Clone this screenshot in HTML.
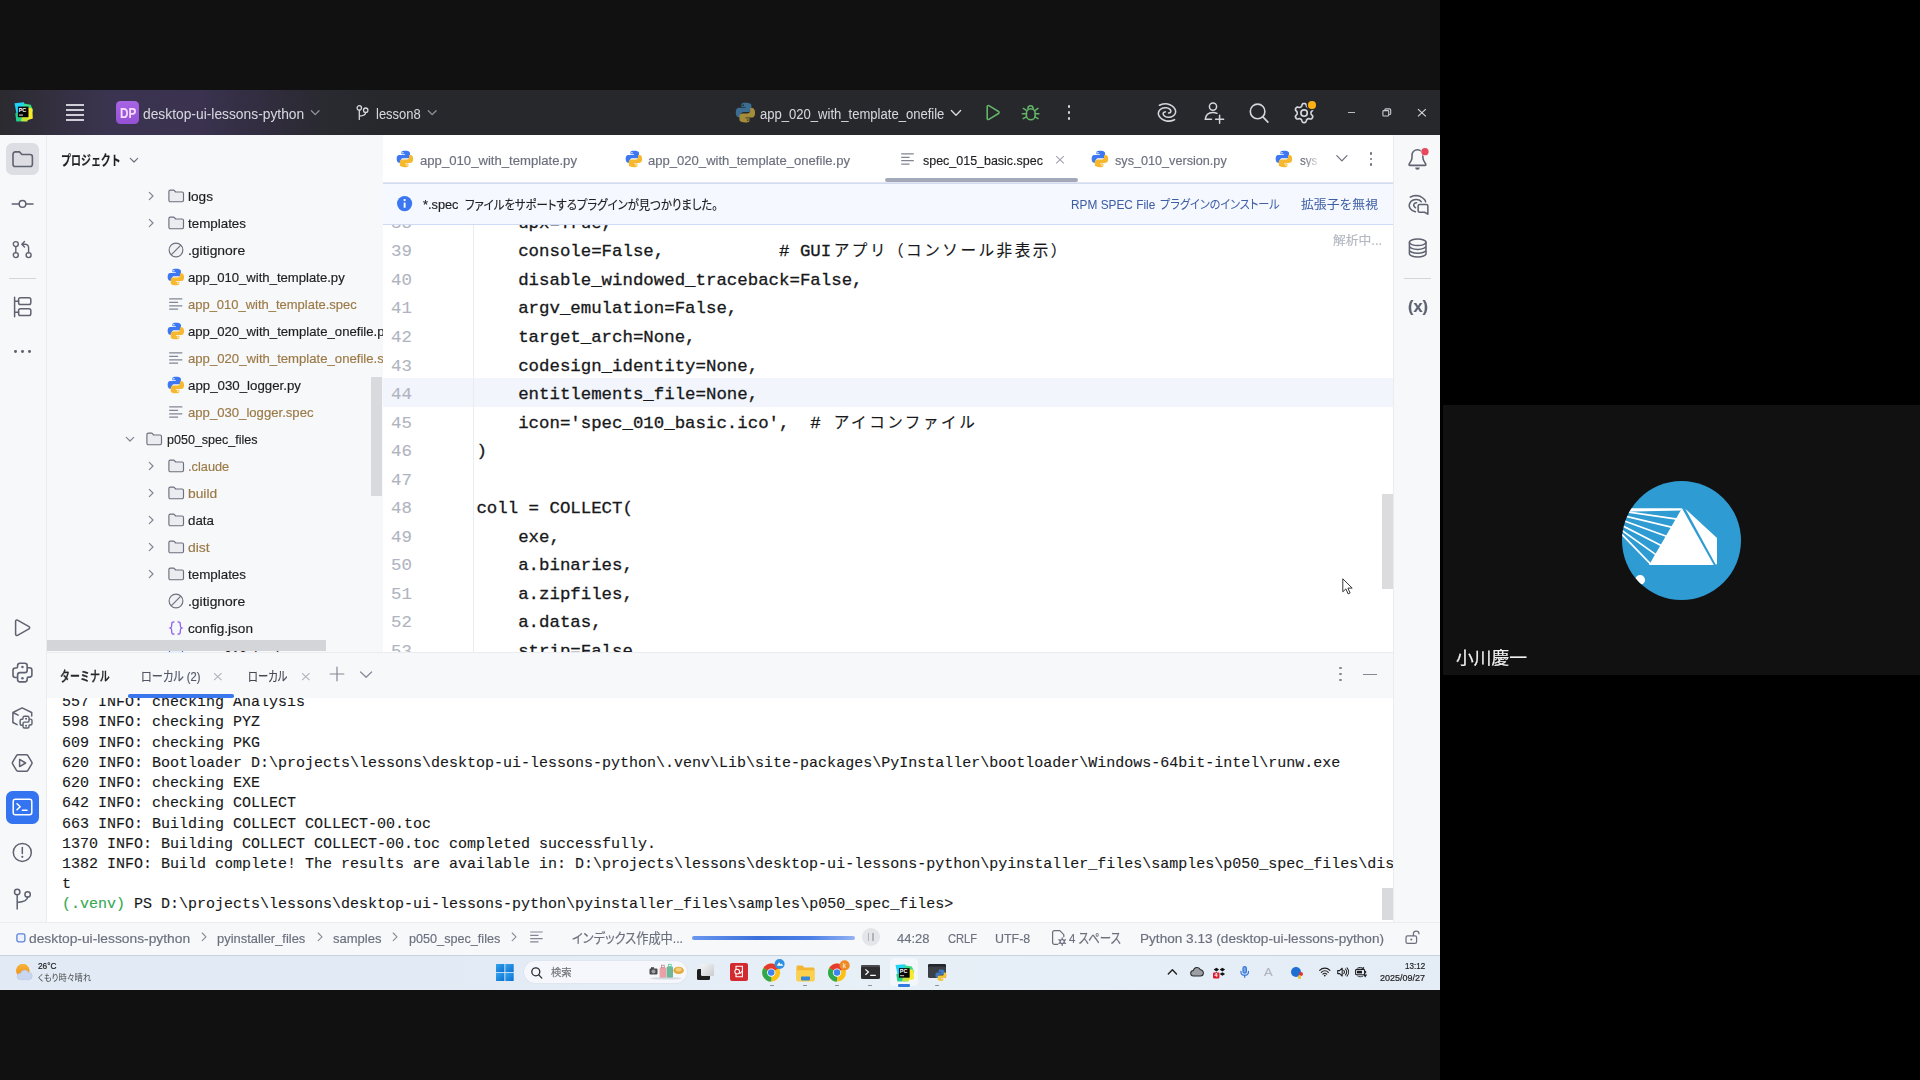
<!DOCTYPE html>
<html lang="ja">
<head>
<meta charset="utf-8">
<title>PyCharm - spec_015_basic.spec</title>
<style>
*{box-sizing:border-box;margin:0;padding:0}
html,body{width:1920px;height:1080px;overflow:hidden;background:#000}
body{position:relative;font-family:"Liberation Sans","Noto Sans CJK JP",sans-serif;font-size:13.5px;color:#1e1f22}
.abs{position:absolute}
.t{position:absolute;white-space:pre;line-height:1;-webkit-text-stroke:0.18px currentColor}
.cj{font-size:15.6px;letter-spacing:2.5px;margin-left:2.5px;-webkit-text-stroke:0.15px currentColor}
.mono{font-family:"Liberation Mono","Noto Sans CJK JP",monospace}
svg{position:absolute;overflow:visible}
#leftbg{left:0;top:0;width:1440px;height:1080px;background:#111111}
#win{left:0;top:90px;width:1440px;height:900px;background:#f7f8fa;overflow:hidden}
/* title bar */
#title{left:0;top:0;width:1440px;height:45px;background:linear-gradient(90deg,#2a2a2f 0px,#332f3e 50px,#3b3450 110px,#3a324f 200px,#322d40 260px,#2a2a31 320px,#27282c 380px,#27282c 1440px)}
#title .t{color:#dfe1e5;font-size:14px;-webkit-text-stroke:0.04px currentColor}
/* strips */
#lstrip{left:0;top:45px;width:47px;height:787px;background:#f7f8fa;box-shadow:inset -1px 0 0 #ebecf0}
#rstrip{left:1393px;top:45px;width:47px;height:787px;background:#f7f8fa;box-shadow:inset 1px 0 0 #ebecf0}
/* project */
#proj{left:47px;top:45px;width:336px;height:517px;background:#f7f8fa;overflow:hidden}
#proj .t{font-size:13.5px;color:#1e1f22}
#proj .t.m{color:#9a7a4a}
/* editor */
#ed{left:383px;top:45px;width:1010px;height:517px;background:#fff;overflow:hidden;box-shadow:inset 1px 0 0 #ebecf0}
#tabs{left:0;top:0;width:1010px;height:48px;background:#fff}
#tabs .t{font-size:13.5px;color:#6c707e}
#banner{left:0;top:48px;width:1010px;height:42px;background:#f5f8fe;box-shadow:inset 0 1px 0 #cfdbf5,inset 0 -1px 0 #cfdbf5}
#banner .t{font-size:13px}
#code{left:0;top:90px;width:1010px;height:427px;background:#fff;overflow:hidden}
.ln{position:absolute;left:0;width:29px;text-align:right;font-family:"Liberation Mono","Noto Sans CJK JP",monospace;font-size:16.4px;color:#a9aebc;line-height:1;white-space:pre}
.cl{position:absolute;left:94px;font-family:"Liberation Mono","Noto Sans CJK JP",monospace;font-size:17.4px;color:#1e1f22;line-height:1;white-space:pre}
/* terminal */
#term{left:47px;top:562px;width:1346px;height:270px;background:#fff;overflow:hidden}
#thead{left:0;top:0;width:1346px;height:46px;background:#f7f8fa;box-shadow:inset 0 1px 0 #ebecf0;z-index:2}
#thead .t{font-size:13px;color:#1e1f22}
.tl{position:absolute;left:15px;font-family:"Liberation Mono","Noto Sans CJK JP",monospace;font-size:15px;color:#1e1f22;line-height:1;white-space:pre}
/* status */
#status{left:0;top:832px;width:1440px;height:33px;background:#f7f8fa;box-shadow:inset 0 1px 0 #ebecf0}
#status .t{font-size:13.5px;color:#6c707e}
/* taskbar */
#task{left:0;top:865px;width:1440px;height:35px;background:linear-gradient(90deg,#e1eaf5 0%,#e2ebf5 30%,#e7eff7 60%,#e4ecf6 100%);box-shadow:inset 0 1px 0 #c9d3df}
#task .t{color:#1e1f22}
/* right */
#rpanel{left:1443px;top:405px;width:477px;height:270px;background:#111111}
</style>
</head>
<body>
<div id="leftbg" class="abs"></div>
<div id="win" class="abs">
  <div id="title" class="abs"><svg style="left:13.50px;top:12.00px;" width="19" height="20" viewBox="0 0 19 20" preserveAspectRatio="none"><path d="M0.5 1.2L10 0.2l1.2 8-8.7 3.2z" fill="#21d3f5"/><path d="M9.5 1.5l7.2 1.2 2.2 5.6-3.2 8.2-6.2.4z" fill="#3ddc84"/><path d="M12.5 5.2l5.8 1.4.5 10-9 2.6-2.5-6z" fill="#f6ea2a"/><path d="M1.3 11.2l9.6-1.5 1.6 9.6-10.2.2z" fill="#23d18b"/><path d="M8 14l6 .2-.5 5.3-6.5-.3z" fill="#c5e236"/><rect x="3.9" y="4.6" width="10.6" height="10.6" fill="#060606"/><text x="4.7" y="10.2" font-family="Liberation Sans,sans-serif" font-size="5.6" font-weight="700" fill="#fff" textLength="7.6" lengthAdjust="spacingAndGlyphs">PC</text><rect x="5" y="12.6" width="4" height="0.9" fill="#fff"/></svg>
<div class="abs" style="left:66.10px;top:14.30px;width:17.80px;height:1.60px;background:#cdced6;"></div>
<div class="abs" style="left:66.10px;top:19.30px;width:17.80px;height:1.60px;background:#cdced6;"></div>
<div class="abs" style="left:66.10px;top:24.30px;width:17.80px;height:1.60px;background:#cdced6;"></div>
<div class="abs" style="left:66.10px;top:29.30px;width:17.80px;height:1.60px;background:#cdced6;"></div>
<div class="abs" style="left:116.10px;top:10.90px;width:22.70px;height:23.00px;background:linear-gradient(180deg,#a765e6,#9451d3);border-radius:4.6px"></div>
<div class="t" style="left:120.20px;top:16.47px;font-size:14.8px;color:#f6dcff;font-weight:700;transform:scaleX(0.7878);transform-origin:0 0;">DP</div>
<div class="t" style="left:143.40px;top:17.25px;font-size:14px;color:#d5d7dd;transform:scaleX(0.9864);transform-origin:0 0;">desktop-ui-lessons-python</div>
<svg style="left:0.00px;top:0.00px;" width="1440" height="45" viewBox="0 0 1440 45" preserveAspectRatio="none"><path d="M311.4 20.799999999999997L315.2 24.599999999999994L319 20.799999999999997" fill="none" stroke="#9093a0" stroke-width="1.3" stroke-linecap="round" stroke-linejoin="round"/><path d="M428.3 20.799999999999997L432.20000000000005 24.599999999999994L436.1 20.799999999999997" fill="none" stroke="#9093a0" stroke-width="1.3" stroke-linecap="round" stroke-linejoin="round"/><path d="M951.4 20.400000000000006L956.0 25.200000000000003L960.6 20.400000000000006" fill="none" stroke="#d5d7dd" stroke-width="1.4" stroke-linecap="round" stroke-linejoin="round"/></svg>
<svg style="left:356.00px;top:15.00px;" width="13" height="15" viewBox="0 0 13 15" preserveAspectRatio="none"><g fill="none" stroke="#d5d7dd" stroke-width="1.3" stroke-linecap="round"><circle cx="3.3" cy="2.9" r="2.2"/><circle cx="9.7" cy="5.2" r="2.2"/><path d="M3.3 5.1v9.3M9.7 7.4c0 2.6-2.2 3.4-6.4 3.6"/></g></svg>
<div class="t" style="left:376.30px;top:17.25px;font-size:14px;color:#d5d7dd;transform:scaleX(0.9261);transform-origin:0 0;">lesson8</div>
<svg style="left:734.62px;top:12.12px;" width="20.864864864864863" height="21.363157894736844" viewBox="0 0 16 16.4" preserveAspectRatio="none"><path d="M7.9.6C4.7.6 4.9 2 4.9 2v1.9H8v.6H3.2S.6 4.2.6 8c0 3.8 2.3 3.7 2.3 3.7h1.4V9.9s-.1-2.3 2.3-2.3h3.8s2.2 0 2.2-2.1V2.7S12.9.6 7.9.6z" fill="#3c6d92"/><circle cx="6.2" cy="2.5" r=".75" fill="#2a3a48"/><g transform="rotate(180 8 8.2)"><path d="M7.9.6C4.7.6 4.9 2 4.9 2v1.9H8v.6H3.2S.6 4.2.6 8c0 3.8 2.3 3.7 2.3 3.7h1.4V9.9s-.1-2.3 2.3-2.3h3.8s2.2 0 2.2-2.1V2.7S12.9.6 7.9.6z" fill="#a38c3a"/><circle cx="6.2" cy="2.5" r=".75" fill="#4a4226"/></g></svg>
<div class="t" style="left:760.40px;top:17.25px;font-size:14px;color:#d5d7dd;transform:scaleX(0.9326);transform-origin:0 0;">app_020_with_template_onefile</div>
<svg style="left:984.00px;top:13.00px;" width="18" height="19" viewBox="0 0 18 19" preserveAspectRatio="none"><path d="M3.2 3.6c0-.9.9-1.4 1.7-1l9.6 5.9c.7.5.7 1.5 0 2l-9.6 5.9c-.8.4-1.7-.1-1.7-1z" fill="none" stroke="#62b568" stroke-width="1.6" stroke-linejoin="round"/></svg>
<svg style="left:1016.00px;top:7.00px;" width="30" height="30" viewBox="0 0 1080 1080" preserveAspectRatio="none"><g fill="none" stroke="#62b568" stroke-width="56" stroke-linecap="round"><path d="M432 415A92 100 0 0 1 616 415"/><rect x="375" y="420" width="315" height="400" rx="157"/><path d="M375 480L262 412M375 600H228M375 715L258 780M690 480L790 412M690 600H825M690 715L792 780"/></g></svg>
<div class="abs" style="left:1067.50px;top:15.40px;width:2.80px;height:2.80px;background:#d5d7dd;border-radius:50%"></div>
<div class="abs" style="left:1067.50px;top:21.20px;width:2.80px;height:2.80px;background:#d5d7dd;border-radius:50%"></div>
<div class="abs" style="left:1067.50px;top:27.00px;width:2.80px;height:2.80px;background:#d5d7dd;border-radius:50%"></div>
<svg style="left:1152.00px;top:8.00px;" width="30" height="30" viewBox="0 0 1080 1080" preserveAspectRatio="none"><path d="M268 262C290 255 351 226 400 218C449 210 507 205 560 215C613 225 675 249 720 280C765 311 806 362 828 400C850 438 855 470 850 505C845 540 828 583 800 612C772 641 725 667 685 680C645 693 599 697 560 692C521 687 478 669 452 650C426 631 407 601 402 580C397 559 406 535 420 522C434 509 474 504 485 500" fill="none" stroke="#d5d7dd" stroke-width="56" stroke-linecap="round"/><g transform="rotate(180 540 521)"><path d="M268 262C290 255 351 226 400 218C449 210 507 205 560 215C613 225 675 249 720 280C765 311 806 362 828 400C850 438 855 470 850 505C845 540 828 583 800 612C772 641 725 667 685 680C645 693 599 697 560 692C521 687 478 669 452 650C426 631 407 601 402 580C397 559 406 535 420 522C434 509 474 504 485 500" fill="none" stroke="#d5d7dd" stroke-width="56" stroke-linecap="round"/></g></svg>
<svg style="left:1204.00px;top:11.90px;" width="21" height="22" viewBox="0 0 21 22" preserveAspectRatio="none"><g fill="none" stroke="#d5d7dd" stroke-width="1.5" stroke-linecap="round"><circle cx="9" cy="4.6" r="3.6"/><path d="M13 11.300c-1.100-.6-2.500-.9-4.100-.9-4.200 0-7.200 2.400-7.600 6.900h6.200"/><path d="M15.6 13.2v8M11.6 17.2h8"/></g></svg>
<svg style="left:1249.00px;top:13.00px;" width="20" height="20" viewBox="0 0 20 20" preserveAspectRatio="none"><g fill="none" stroke="#d5d7dd" stroke-width="1.6" stroke-linecap="round"><circle cx="8.6" cy="8.4" r="7.3"/><path d="M13.9 13.9l5 5.2"/></g></svg>
<svg style="left:1294.00px;top:12.50px;" width="20" height="21" viewBox="0 0 20 21" preserveAspectRatio="none"><path d="M10.10 0.50 L10.52 0.52 L10.93 0.59 L11.33 0.74 L11.69 1.01 L12.00 1.47 L12.23 2.11 L12.40 2.74 L12.59 3.22 L12.80 3.53 L13.04 3.75 L13.29 3.92 L13.55 4.07 L13.81 4.22 L14.09 4.35 L14.40 4.45 L14.77 4.48 L15.28 4.40 L15.92 4.23 L16.58 4.11 L17.13 4.15 L17.55 4.33 L17.88 4.60 L18.14 4.93 L18.37 5.27 L18.56 5.65 L18.70 6.04 L18.78 6.46 L18.73 6.91 L18.48 7.41 L18.04 7.92 L17.58 8.39 L17.26 8.79 L17.10 9.13 L17.03 9.44 L17.01 9.75 L17.00 10.05 L17.01 10.35 L17.03 10.66 L17.10 10.97 L17.26 11.31 L17.58 11.71 L18.04 12.18 L18.48 12.69 L18.73 13.19 L18.78 13.64 L18.70 14.06 L18.56 14.45 L18.37 14.82 L18.14 15.17 L17.88 15.50 L17.55 15.77 L17.13 15.95 L16.58 15.99 L15.92 15.87 L15.28 15.70 L14.77 15.62 L14.40 15.65 L14.09 15.75 L13.81 15.88 L13.55 16.03 L13.29 16.18 L13.04 16.35 L12.80 16.57 L12.59 16.88 L12.40 17.36 L12.23 17.99 L12.00 18.63 L11.69 19.09 L11.33 19.36 L10.93 19.51 L10.52 19.58 L10.10 19.60 L9.68 19.58 L9.27 19.51 L8.87 19.36 L8.51 19.09 L8.20 18.63 L7.97 17.99 L7.80 17.36 L7.61 16.88 L7.40 16.57 L7.16 16.35 L6.91 16.18 L6.65 16.03 L6.39 15.88 L6.11 15.75 L5.80 15.65 L5.43 15.62 L4.92 15.70 L4.28 15.87 L3.62 15.99 L3.07 15.95 L2.65 15.77 L2.32 15.50 L2.06 15.17 L1.83 14.83 L1.64 14.45 L1.50 14.06 L1.42 13.64 L1.47 13.19 L1.72 12.69 L2.16 12.18 L2.62 11.71 L2.94 11.31 L3.10 10.97 L3.17 10.66 L3.19 10.35 L3.20 10.05 L3.19 9.75 L3.17 9.44 L3.10 9.13 L2.94 8.79 L2.62 8.39 L2.16 7.92 L1.72 7.41 L1.47 6.91 L1.42 6.46 L1.50 6.04 L1.64 5.65 L1.83 5.28 L2.06 4.93 L2.32 4.60 L2.65 4.33 L3.07 4.15 L3.62 4.11 L4.28 4.23 L4.92 4.40 L5.43 4.48 L5.80 4.45 L6.11 4.35 L6.39 4.22 L6.65 4.07 L6.91 3.92 L7.16 3.75 L7.40 3.53 L7.61 3.22 L7.80 2.74 L7.97 2.11 L8.20 1.47 L8.51 1.01 L8.87 0.74 L9.27 0.59 L9.68 0.52 L10.10 0.50Z" fill="none" stroke="#d5d7dd" stroke-width="1.65" stroke-linejoin="round"/><circle cx="10.1" cy="10.05" r="3.2" fill="none" stroke="#d5d7dd" stroke-width="1.65"/></svg>
<div class="abs" style="left:1307.95px;top:11.25px;width:7.60px;height:7.60px;background:#ffb011;border-radius:50%;box-shadow:0 0 0 1.3px #27282c"></div>
<div class="abs" style="left:1347.80px;top:22.10px;width:7.60px;height:1.10px;background:#b9bbc2;"></div>
<svg style="left:1382.00px;top:18.00px;" width="10" height="9" viewBox="0 0 10 9" preserveAspectRatio="none"><g fill="none" stroke="#c9cbd1" stroke-width="1.1"><rect x="0.9" y="2.6" width="5.8" height="5.4" rx="0.8"/><path d="M2.8 2.4V1.9c0-.6.4-1 1-1h3.9c.6 0 1 .4 1 1v3.6c0 .6-.4 1-1 1h-.6"/></g></svg>
<svg style="left:1417.00px;top:18.00px;" width="10" height="9" viewBox="0 0 10 9" preserveAspectRatio="none"><path d="M1 1.1l7.8 7.3M8.8 1.1L1 8.4" stroke="#d5d7dd" stroke-width="1.15" fill="none"/></svg></div>
  <div id="lstrip" class="abs"><div class="abs" style="left:6.00px;top:7.80px;width:33.00px;height:32.60px;background:#dcdee3;border-radius:6.5px"></div>
<svg style="left:11.00px;top:14.00px;" width="24" height="20" viewBox="0 0 24 20" preserveAspectRatio="none"><g fill="none" stroke="#5f6270" stroke-width="1.6" stroke-linecap="round" stroke-linejoin="round"><path d="M2 5.2c0-1.3 1-2.3 2.3-2.3h4.2l2.4 2.6h8.2c1.3 0 2.3 1 2.3 2.3v7.4c0 1.3-1 2.3-2.3 2.3H4.3C3 17.5 2 16.500 2 15.200z"/></g></svg>
<svg style="left:10.00px;top:61.00px;" width="26" height="16" viewBox="0 0 26 16" preserveAspectRatio="none"><g fill="none" stroke="#5f6270" stroke-width="1.5" stroke-linecap="round" stroke-linejoin="round"><path d="M2.2 7.9h7M16 7.900h7"/><circle cx="12.5" cy="7.9" r="3.3"/></g></svg>
<svg style="left:12.00px;top:105.00px;" width="22" height="20" viewBox="0 0 22 20" preserveAspectRatio="none"><g fill="none" stroke="#5f6270" stroke-width="1.4" stroke-linecap="round" stroke-linejoin="round"><circle cx="3.8" cy="4.1" r="2.5"/><circle cx="3.8" cy="15.1" r="2.5"/><path d="M3.8 6.400v6.400"/><circle cx="16.6" cy="15.1" r="2.5"/><path d="M16.6 12.800V7.800c0-2.200-1.400-3.600-3.600-3.600h-2.800M12.500 1.500L9.800 4.200l2.700 2.700"/></g></svg>
<div class="abs" style="left:9.30px;top:142.80px;width:26.30px;height:1.10px;background:#d3d5db;"></div>
<svg style="left:13.00px;top:161.00px;" width="20" height="22" viewBox="0 0 20 22" preserveAspectRatio="none"><g fill="none" stroke="#5f6270" stroke-width="1.5" stroke-linecap="round" stroke-linejoin="round"><path d="M1.600 1.300v19.400M1.600 5.200h4M1.600 16.200h4"/><rect x="5.600" y="1.800" width="12.200" height="6.800" rx="1.800"/><rect x="5.600" y="12.800" width="12.200" height="6.800" rx="1.800"/></g></svg>
<div class="abs" style="left:13.80px;top:214.80px;width:2.80px;height:2.80px;background:#5f6270;border-radius:50%"></div>
<div class="abs" style="left:20.90px;top:214.80px;width:2.80px;height:2.80px;background:#5f6270;border-radius:50%"></div>
<div class="abs" style="left:28.00px;top:214.80px;width:2.80px;height:2.80px;background:#5f6270;border-radius:50%"></div>
<svg style="left:13.00px;top:482.00px;" width="20" height="22" viewBox="0 0 20 22" preserveAspectRatio="none"><g fill="none" stroke="#5f6270" stroke-width="1.5" stroke-linecap="round" stroke-linejoin="round"><path d="M2.600 4.200c0-1 1-1.600 1.900-1.100l11.500 6.500c.9.500.9 1.700 0 2.200L4.500 18.300c-.900.500-1.900-.100-1.900-1.100z"/></g></svg>
<svg style="left:8.00px;top:523.00px;" width="30" height="30" viewBox="0 0 1080 1080" preserveAspectRatio="none"><path d="M340 700H265A85 85 0 0 1 180 615V445A85 85 0 0 1 265 360H300A45 45 0 0 0 345 315V275A85 85 0 0 1 430 190H605A85 85 0 0 1 690 275V440A85 85 0 0 1 605 525H430A85 85 0 0 0 345 610V775A85 85 0 0 0 430 860H605A85 85 0 0 0 690 775V735A45 45 0 0 1 735 690H775A85 85 0 0 0 860 605V435A85 85 0 0 0 775 350H700" fill="none" stroke="#5f6270" stroke-width="58" stroke-linecap="round" stroke-linejoin="round"/><circle cx="520" cy="325" r="46" fill="#5f6270"/><circle cx="520" cy="730" r="46" fill="#5f6270"/></svg>
<svg style="left:11.00px;top:571.00px;" width="23" height="24" viewBox="0 0 23 24" preserveAspectRatio="none"><g fill="none" stroke="#5f6270" stroke-width="1.5" stroke-linecap="round" stroke-linejoin="round"><path d="M6.100 18.600L1.900 16.500V6.500L11.100 1.900l9.600 4.600v3.600M1.900 6.500l5.200 2.600"/></g></svg>
<svg style="left:16.99px;top:578.11px;" width="18.827027027027025" height="18.827027027027025" viewBox="0 0 1080 1080" preserveAspectRatio="none"><path d="M340 700H265A85 85 0 0 1 180 615V445A85 85 0 0 1 265 360H300A45 45 0 0 0 345 315V275A85 85 0 0 1 430 190H605A85 85 0 0 1 690 275V440A85 85 0 0 1 605 525H430A85 85 0 0 0 345 610V775A85 85 0 0 0 430 860H605A85 85 0 0 0 690 775V735A45 45 0 0 1 735 690H775A85 85 0 0 0 860 605V435A85 85 0 0 0 775 350H700" fill="none" stroke="#5f6270" stroke-width="82" stroke-linecap="round" stroke-linejoin="round"/><circle cx="520" cy="325" r="58" fill="#5f6270"/><circle cx="520" cy="730" r="58" fill="#5f6270"/></svg>
<svg style="left:11.00px;top:617.70px;" width="23" height="20" viewBox="0 0 23 20" preserveAspectRatio="none"><g fill="none" stroke="#5f6270" stroke-width="1.5" stroke-linecap="round" stroke-linejoin="round"><path d="M6.900 1.800h8.600c.6 0 1.100.3 1.400.8l3.900 6.600c.3.500.3 1.100 0 1.600l-3.900 6.600c-.3.500-.8.800-1.400.8H6.900c-.6 0-1.100-.3-1.400-.8L1.600 10.800c-.3-.5-.3-1.100 0-1.600l3.900-6.600c.3-.5.800-.8 1.400-.8z"/><path d="M8.600 6.400v7.200l6-3.600z"/></g></svg>
<div class="abs" style="left:5.90px;top:656.00px;width:32.70px;height:32.70px;background:#3574f0;border-radius:6.5px"></div>
<svg style="left:12.00px;top:663.40px;" width="21" height="18" viewBox="0 0 21 18" preserveAspectRatio="none"><g fill="none" stroke="#ffffff" stroke-width="1.5" stroke-linecap="round" stroke-linejoin="round"><rect x="1.200" y="1.200" width="18.600" height="15.600" rx="2.200"/><path d="M5 5.800l3.200 3-3.200 3M10.400 12.200h4.600"/></g></svg>
<svg style="left:11.00px;top:706.00px;" width="23" height="23" viewBox="0 0 23 23" preserveAspectRatio="none"><g fill="none" stroke="#5f6270" stroke-width="1.5" stroke-linecap="round" stroke-linejoin="round"><circle cx="11.300" cy="11.400" r="9"/><path d="M11.300 6.400v6.200"/></g><circle cx="11.300" cy="15.800" r="1.100" fill="#5f6270"/></svg>
<svg style="left:12.50px;top:753.00px;" width="20" height="23" viewBox="0 0 20 23" preserveAspectRatio="none"><g fill="none" stroke="#5f6270" stroke-width="1.5" stroke-linecap="round" stroke-linejoin="round"><circle cx="4.200" cy="4" r="2.700"/><circle cx="14.600" cy="6.400" r="2.700"/><path d="M4.200 6.700v14.300M14.600 9.100c0 3.800-3.600 5-10.400 5.300"/></g></svg></div>
  <div id="proj" class="abs"><div class="t" style="left:13.50px;top:18.87px;font-size:13.5px;color:#1e1f22;font-weight:700;transform:scaleX(0.7383);transform-origin:0 0;">プロジェクト</div>
<svg style="left:78.50px;top:16.50px;" width="16" height="16" viewBox="0 0 16 16" preserveAspectRatio="none"><path d="M4.3 6.3l3.7 3.7 3.7-3.7" fill="none" stroke="#6c707e" stroke-width="1.2" stroke-linecap="round" stroke-linejoin="round"/></svg>
<div class="t" style="left:141.30px;top:55.47px;font-size:13.5px;color:#1e1f22;transform:scaleX(1.0095);transform-origin:0 0;">logs</div>
<svg style="left:120.70px;top:52.90px;" width="16" height="16" viewBox="0 0 16 16" preserveAspectRatio="none"><path d="M.9 3.5c0-.8.6-1.4 1.4-1.4h3.6l1.8 1.9h6.4c.8 0 1.4.6 1.4 1.4v6.9c0 .8-.6 1.4-1.4 1.4H2.3c-.8 0-1.4-.6-1.4-1.4z" fill="#ebecf0" stroke="#6c707e" stroke-width="1.15" stroke-linejoin="round"/></svg>
<svg style="left:96.20px;top:52.90px;" width="16" height="16" viewBox="0 0 16 16" preserveAspectRatio="none"><path d="M6.3 4.3l3.7 3.7-3.7 3.7" fill="none" stroke="#818594" stroke-width="1.2" stroke-linecap="round" stroke-linejoin="round"/></svg>
<div class="t" style="left:141.30px;top:82.47px;font-size:13.5px;color:#1e1f22;transform:scaleX(0.9909);transform-origin:0 0;">templates</div>
<svg style="left:120.70px;top:79.90px;" width="16" height="16" viewBox="0 0 16 16" preserveAspectRatio="none"><path d="M.9 3.5c0-.8.6-1.4 1.4-1.4h3.6l1.8 1.9h6.4c.8 0 1.4.6 1.4 1.4v6.9c0 .8-.6 1.4-1.4 1.4H2.3c-.8 0-1.4-.6-1.4-1.4z" fill="#ebecf0" stroke="#6c707e" stroke-width="1.15" stroke-linejoin="round"/></svg>
<svg style="left:96.20px;top:79.90px;" width="16" height="16" viewBox="0 0 16 16" preserveAspectRatio="none"><path d="M6.3 4.3l3.7 3.7-3.7 3.7" fill="none" stroke="#818594" stroke-width="1.2" stroke-linecap="round" stroke-linejoin="round"/></svg>
<div class="t" style="left:141.30px;top:109.47px;font-size:13.5px;color:#1e1f22;transform:scaleX(1.0298);transform-origin:0 0;">.gitignore</div>
<svg style="left:120.70px;top:106.90px;" width="16" height="16" viewBox="0 0 16 16" preserveAspectRatio="none"><circle cx="8" cy="8" r="6.9" fill="#f0f1f3" stroke="#6c707e" stroke-width="1.15"/><path d="M3.2 12.8l9.6-9.6" stroke="#6c707e" stroke-width="1.15"/></svg>
<div class="t" style="left:141.30px;top:136.47px;font-size:13.5px;color:#1e1f22;transform:scaleX(0.9710);transform-origin:0 0;">app_010_with_template.py</div>
<svg style="left:119.84px;top:132.75px;" width="17.73" height="17.9" viewBox="0 0 16 16.4" preserveAspectRatio="none"><path d="M7.9.6C4.7.6 4.9 2 4.9 2v1.9H8v.6H3.2S.6 4.2.6 8c0 3.8 2.3 3.7 2.3 3.7h1.4V9.9s-.1-2.3 2.3-2.3h3.8s2.2 0 2.2-2.1V2.7S12.9.6 7.9.6z" fill="#3d78f2"/><circle cx="6.2" cy="2.5" r=".75" fill="#dfe9ff"/><g transform="rotate(180 8 8.2)"><path d="M7.9.6C4.7.6 4.9 2 4.9 2v1.9H8v.6H3.2S.6 4.2.6 8c0 3.8 2.3 3.7 2.3 3.7h1.4V9.9s-.1-2.3 2.3-2.3h3.8s2.2 0 2.2-2.1V2.7S12.9.6 7.9.6z" fill="#f5b82e"/><circle cx="6.2" cy="2.5" r=".75" fill="#fff3d0"/></g></svg>
<div class="t" style="left:141.30px;top:163.47px;font-size:13.5px;color:#9b7a48;transform:scaleX(0.9605);transform-origin:0 0;">app_010_with_template.spec</div>
<svg style="left:120.70px;top:160.60px;" width="16" height="16" viewBox="0 0 16 16" preserveAspectRatio="none"><path d="M1.2 2.9h13.1M1.2 6.3h8.9M1.2 9.75h13.1M1.2 13.2h8.9" stroke="#818594" stroke-width="1.25" fill="none"/></svg>
<div class="t" style="left:141.30px;top:190.47px;font-size:13.5px;color:#1e1f22;transform:scaleX(0.9735);transform-origin:0 0;">app_020_with_template_onefile.py</div>
<svg style="left:119.84px;top:186.75px;" width="17.73" height="17.9" viewBox="0 0 16 16.4" preserveAspectRatio="none"><path d="M7.9.6C4.7.6 4.9 2 4.9 2v1.9H8v.6H3.2S.6 4.2.6 8c0 3.8 2.3 3.7 2.3 3.7h1.4V9.9s-.1-2.3 2.3-2.3h3.8s2.2 0 2.2-2.1V2.7S12.9.6 7.9.6z" fill="#3d78f2"/><circle cx="6.2" cy="2.5" r=".75" fill="#dfe9ff"/><g transform="rotate(180 8 8.2)"><path d="M7.9.6C4.7.6 4.9 2 4.9 2v1.9H8v.6H3.2S.6 4.2.6 8c0 3.8 2.3 3.7 2.3 3.7h1.4V9.9s-.1-2.3 2.3-2.3h3.8s2.2 0 2.2-2.1V2.7S12.9.6 7.9.6z" fill="#f5b82e"/><circle cx="6.2" cy="2.5" r=".75" fill="#fff3d0"/></g></svg>
<div class="t" style="left:141.30px;top:217.47px;font-size:13.5px;color:#9b7a48;transform:scaleX(0.9735);transform-origin:0 0;">app_020_with_template_onefile.spec</div>
<svg style="left:120.70px;top:214.60px;" width="16" height="16" viewBox="0 0 16 16" preserveAspectRatio="none"><path d="M1.2 2.9h13.1M1.2 6.3h8.9M1.2 9.75h13.1M1.2 13.2h8.9" stroke="#818594" stroke-width="1.25" fill="none"/></svg>
<div class="t" style="left:141.30px;top:244.47px;font-size:13.5px;color:#1e1f22;transform:scaleX(0.9838);transform-origin:0 0;">app_030_logger.py</div>
<svg style="left:119.84px;top:240.75px;" width="17.73" height="17.9" viewBox="0 0 16 16.4" preserveAspectRatio="none"><path d="M7.9.6C4.7.6 4.9 2 4.9 2v1.9H8v.6H3.2S.6 4.2.6 8c0 3.8 2.3 3.7 2.3 3.7h1.4V9.9s-.1-2.3 2.3-2.3h3.8s2.2 0 2.2-2.1V2.7S12.9.6 7.9.6z" fill="#3d78f2"/><circle cx="6.2" cy="2.5" r=".75" fill="#dfe9ff"/><g transform="rotate(180 8 8.2)"><path d="M7.9.6C4.7.6 4.9 2 4.9 2v1.9H8v.6H3.2S.6 4.2.6 8c0 3.8 2.3 3.7 2.3 3.7h1.4V9.9s-.1-2.3 2.3-2.3h3.8s2.2 0 2.2-2.1V2.7S12.9.6 7.9.6z" fill="#f5b82e"/><circle cx="6.2" cy="2.5" r=".75" fill="#fff3d0"/></g></svg>
<div class="t" style="left:141.30px;top:271.47px;font-size:13.5px;color:#9b7a48;transform:scaleX(0.9719);transform-origin:0 0;">app_030_logger.spec</div>
<svg style="left:120.70px;top:268.60px;" width="16" height="16" viewBox="0 0 16 16" preserveAspectRatio="none"><path d="M1.2 2.9h13.1M1.2 6.3h8.9M1.2 9.75h13.1M1.2 13.2h8.9" stroke="#818594" stroke-width="1.25" fill="none"/></svg>
<div class="t" style="left:119.90px;top:298.47px;font-size:13.5px;color:#1e1f22;transform:scaleX(0.9285);transform-origin:0 0;">p050_spec_files</div>
<svg style="left:99.30px;top:295.90px;" width="16" height="16" viewBox="0 0 16 16" preserveAspectRatio="none"><path d="M.9 3.5c0-.8.6-1.4 1.4-1.4h3.6l1.8 1.9h6.4c.8 0 1.4.6 1.4 1.4v6.9c0 .8-.6 1.4-1.4 1.4H2.3c-.8 0-1.4-.6-1.4-1.4z" fill="#ebecf0" stroke="#6c707e" stroke-width="1.15" stroke-linejoin="round"/></svg>
<svg style="left:74.80px;top:295.90px;" width="16" height="16" viewBox="0 0 16 16" preserveAspectRatio="none"><path d="M4.3 6.3l3.7 3.7 3.7-3.7" fill="none" stroke="#818594" stroke-width="1.2" stroke-linecap="round" stroke-linejoin="round"/></svg>
<div class="t" style="left:141.30px;top:325.47px;font-size:13.5px;color:#9b7a48;transform:scaleX(0.9461);transform-origin:0 0;">.claude</div>
<svg style="left:120.70px;top:322.90px;" width="16" height="16" viewBox="0 0 16 16" preserveAspectRatio="none"><path d="M.9 3.5c0-.8.6-1.4 1.4-1.4h3.6l1.8 1.9h6.4c.8 0 1.4.6 1.4 1.4v6.9c0 .8-.6 1.4-1.4 1.4H2.3c-.8 0-1.4-.6-1.4-1.4z" fill="#ebecf0" stroke="#6c707e" stroke-width="1.15" stroke-linejoin="round"/></svg>
<svg style="left:96.20px;top:322.90px;" width="16" height="16" viewBox="0 0 16 16" preserveAspectRatio="none"><path d="M6.3 4.3l3.7 3.7-3.7 3.7" fill="none" stroke="#818594" stroke-width="1.2" stroke-linecap="round" stroke-linejoin="round"/></svg>
<div class="t" style="left:141.30px;top:352.47px;font-size:13.5px;color:#9b7a48;transform:scaleX(1.0234);transform-origin:0 0;">build</div>
<svg style="left:120.70px;top:349.90px;" width="16" height="16" viewBox="0 0 16 16" preserveAspectRatio="none"><path d="M.9 3.5c0-.8.6-1.4 1.4-1.4h3.6l1.8 1.9h6.4c.8 0 1.4.6 1.4 1.4v6.9c0 .8-.6 1.4-1.4 1.4H2.3c-.8 0-1.4-.6-1.4-1.4z" fill="#ebecf0" stroke="#6c707e" stroke-width="1.15" stroke-linejoin="round"/></svg>
<svg style="left:96.20px;top:349.90px;" width="16" height="16" viewBox="0 0 16 16" preserveAspectRatio="none"><path d="M6.3 4.3l3.7 3.7-3.7 3.7" fill="none" stroke="#818594" stroke-width="1.2" stroke-linecap="round" stroke-linejoin="round"/></svg>
<div class="t" style="left:141.30px;top:379.47px;font-size:13.5px;color:#1e1f22;transform:scaleX(0.9893);transform-origin:0 0;">data</div>
<svg style="left:120.70px;top:376.90px;" width="16" height="16" viewBox="0 0 16 16" preserveAspectRatio="none"><path d="M.9 3.5c0-.8.6-1.4 1.4-1.4h3.6l1.8 1.9h6.4c.8 0 1.4.6 1.4 1.4v6.9c0 .8-.6 1.4-1.4 1.4H2.3c-.8 0-1.4-.6-1.4-1.4z" fill="#ebecf0" stroke="#6c707e" stroke-width="1.15" stroke-linejoin="round"/></svg>
<svg style="left:96.20px;top:376.90px;" width="16" height="16" viewBox="0 0 16 16" preserveAspectRatio="none"><path d="M6.3 4.3l3.7 3.7-3.7 3.7" fill="none" stroke="#818594" stroke-width="1.2" stroke-linecap="round" stroke-linejoin="round"/></svg>
<div class="t" style="left:141.30px;top:406.47px;font-size:13.5px;color:#9b7a48;transform:scaleX(1.0326);transform-origin:0 0;">dist</div>
<svg style="left:120.70px;top:403.90px;" width="16" height="16" viewBox="0 0 16 16" preserveAspectRatio="none"><path d="M.9 3.5c0-.8.6-1.4 1.4-1.4h3.6l1.8 1.9h6.4c.8 0 1.4.6 1.4 1.4v6.9c0 .8-.6 1.4-1.4 1.4H2.3c-.8 0-1.4-.6-1.4-1.4z" fill="#ebecf0" stroke="#6c707e" stroke-width="1.15" stroke-linejoin="round"/></svg>
<svg style="left:96.20px;top:403.90px;" width="16" height="16" viewBox="0 0 16 16" preserveAspectRatio="none"><path d="M6.3 4.3l3.7 3.7-3.7 3.7" fill="none" stroke="#818594" stroke-width="1.2" stroke-linecap="round" stroke-linejoin="round"/></svg>
<div class="t" style="left:141.30px;top:433.47px;font-size:13.5px;color:#1e1f22;transform:scaleX(0.9909);transform-origin:0 0;">templates</div>
<svg style="left:120.70px;top:430.90px;" width="16" height="16" viewBox="0 0 16 16" preserveAspectRatio="none"><path d="M.9 3.5c0-.8.6-1.4 1.4-1.4h3.6l1.8 1.9h6.4c.8 0 1.4.6 1.4 1.4v6.9c0 .8-.6 1.4-1.4 1.4H2.3c-.8 0-1.4-.6-1.4-1.4z" fill="#ebecf0" stroke="#6c707e" stroke-width="1.15" stroke-linejoin="round"/></svg>
<svg style="left:96.20px;top:430.90px;" width="16" height="16" viewBox="0 0 16 16" preserveAspectRatio="none"><path d="M6.3 4.3l3.7 3.7-3.7 3.7" fill="none" stroke="#818594" stroke-width="1.2" stroke-linecap="round" stroke-linejoin="round"/></svg>
<div class="t" style="left:141.30px;top:460.47px;font-size:13.5px;color:#1e1f22;transform:scaleX(1.0298);transform-origin:0 0;">.gitignore</div>
<svg style="left:120.70px;top:457.90px;" width="16" height="16" viewBox="0 0 16 16" preserveAspectRatio="none"><circle cx="8" cy="8" r="6.9" fill="#f0f1f3" stroke="#6c707e" stroke-width="1.15"/><path d="M3.2 12.8l9.6-9.6" stroke="#6c707e" stroke-width="1.15"/></svg>
<div class="t" style="left:141.30px;top:487.47px;font-size:13.5px;color:#1e1f22;transform:scaleX(1.0070);transform-origin:0 0;">config.json</div>
<svg style="left:120.70px;top:484.90px;" width="16" height="16" viewBox="0 0 16 16" preserveAspectRatio="none"><path d="M6 1.8c-1.8 0-2.3.8-2.3 2.2v1.7c0 1.1-.5 1.9-1.6 2.3 1.1.4 1.6 1.2 1.6 2.3V12c0 1.4.5 2.2 2.3 2.2" fill="none" stroke="#8a5cf5" stroke-width="1.25" stroke-linecap="round"/><path d="M10 1.8c1.8 0 2.3.8 2.3 2.2v1.7c0 1.1.5 1.9 1.6 2.3-1.1.4-1.6 1.2-1.6 2.3V12c0 1.4-.5 2.2-2.3 2.2" fill="none" stroke="#8a5cf5" stroke-width="1.25" stroke-linecap="round"/></svg>
<svg style="left:120.70px;top:511.90px;" width="16" height="16" viewBox="0 0 16 16" preserveAspectRatio="none"><rect x="1.5" y="1.5" width="13" height="13" rx="2" fill="#e7efff" stroke="#3574f0" stroke-width="1.2"/></svg>
<div class="t" style="left:141.30px;top:514.47px;font-size:13.5px;color:#1e1f22;">spec_010_basic.py</div>
<div class="abs" style="left:0.00px;top:505.30px;width:278.50px;height:10.70px;background:#d4d5d8;"></div>
<div class="abs" style="left:323.70px;top:241.50px;width:11.00px;height:119.00px;background:#d9dadd;"></div></div>
  <div id="ed" class="abs">
    <div id="tabs" class="abs"><div class="abs" style="left:0.00px;top:47.00px;width:1010.00px;height:1.00px;background:#e4e6ec;"></div>
<svg style="left:12.83px;top:15.45px;" width="17.83783783783784" height="17.802631578947366" viewBox="0 0 16 16.4" preserveAspectRatio="none"><path d="M7.9.6C4.7.6 4.9 2 4.9 2v1.9H8v.6H3.2S.6 4.2.6 8c0 3.8 2.3 3.7 2.3 3.7h1.4V9.9s-.1-2.3 2.3-2.3h3.8s2.2 0 2.2-2.1V2.7S12.9.6 7.9.6z" fill="#3d78f2"/><circle cx="6.2" cy="2.5" r=".75" fill="#dfe9ff"/><g transform="rotate(180 8 8.2)"><path d="M7.9.6C4.7.6 4.9 2 4.9 2v1.9H8v.6H3.2S.6 4.2.6 8c0 3.8 2.3 3.7 2.3 3.7h1.4V9.9s-.1-2.3 2.3-2.3h3.8s2.2 0 2.2-2.1V2.7S12.9.6 7.9.6z" fill="#f5b82e"/><circle cx="6.2" cy="2.5" r=".75" fill="#fff3d0"/></g></svg>
<div class="t" style="left:37.00px;top:18.67px;font-size:13.5px;color:#6c707e;transform:scaleX(0.9729);transform-origin:0 0;">app_010_with_template.py</div>
<svg style="left:242.03px;top:15.45px;" width="17.83783783783784" height="17.802631578947366" viewBox="0 0 16 16.4" preserveAspectRatio="none"><path d="M7.9.6C4.7.6 4.9 2 4.9 2v1.9H8v.6H3.2S.6 4.2.6 8c0 3.8 2.3 3.7 2.3 3.7h1.4V9.9s-.1-2.3 2.3-2.3h3.8s2.2 0 2.2-2.1V2.7S12.9.6 7.9.6z" fill="#3d78f2"/><circle cx="6.2" cy="2.5" r=".75" fill="#dfe9ff"/><g transform="rotate(180 8 8.2)"><path d="M7.9.6C4.7.6 4.9 2 4.9 2v1.9H8v.6H3.2S.6 4.2.6 8c0 3.8 2.3 3.7 2.3 3.7h1.4V9.9s-.1-2.3 2.3-2.3h3.8s2.2 0 2.2-2.1V2.7S12.9.6 7.9.6z" fill="#f5b82e"/><circle cx="6.2" cy="2.5" r=".75" fill="#fff3d0"/></g></svg>
<div class="t" style="left:265.40px;top:18.67px;font-size:13.5px;color:#6c707e;transform:scaleX(0.9680);transform-origin:0 0;">app_020_with_template_onefile.py</div>
<svg style="left:517.00px;top:16.00px;" width="16" height="16" viewBox="0 0 16 16" preserveAspectRatio="none"><path d="M1.2 2.9h12.6M1.2 6.3h8.4M1.2 9.7h12.6M1.2 13.1h8.4" stroke="#818594" stroke-width="1.2" fill="none"/></svg>
<div class="t" style="left:539.60px;top:18.57px;font-size:13.5px;color:#1e1f22;transform:scaleX(0.9234);transform-origin:0 0;">spec_015_basic.spec</div>
<svg style="left:672.00px;top:20.00px;" width="10" height="10" viewBox="0 0 10 10" preserveAspectRatio="none"><path d="M1.2 1.2l7.6 7.2M8.8 1.2L1.2 8.4" stroke="#a0a3ad" stroke-width="1.1" fill="none"/></svg>
<div class="abs" style="left:501.90px;top:42.60px;width:192.80px;height:4.20px;background:#a4a9b9;border-radius:2.1px"></div>
<svg style="left:707.63px;top:15.45px;" width="17.83783783783784" height="17.802631578947366" viewBox="0 0 16 16.4" preserveAspectRatio="none"><path d="M7.9.6C4.7.6 4.9 2 4.9 2v1.9H8v.6H3.2S.6 4.2.6 8c0 3.8 2.3 3.7 2.3 3.7h1.4V9.9s-.1-2.3 2.3-2.3h3.8s2.2 0 2.2-2.1V2.7S12.9.6 7.9.6z" fill="#3d78f2"/><circle cx="6.2" cy="2.5" r=".75" fill="#dfe9ff"/><g transform="rotate(180 8 8.2)"><path d="M7.9.6C4.7.6 4.9 2 4.9 2v1.9H8v.6H3.2S.6 4.2.6 8c0 3.8 2.3 3.7 2.3 3.7h1.4V9.9s-.1-2.3 2.3-2.3h3.8s2.2 0 2.2-2.1V2.7S12.9.6 7.9.6z" fill="#f5b82e"/><circle cx="6.2" cy="2.5" r=".75" fill="#fff3d0"/></g></svg>
<div class="t" style="left:732.00px;top:18.67px;font-size:13.5px;color:#6c707e;transform:scaleX(0.9361);transform-origin:0 0;">sys_010_version.py</div>
<svg style="left:892.33px;top:15.45px;" width="17.83783783783784" height="17.802631578947366" viewBox="0 0 16 16.4" preserveAspectRatio="none"><path d="M7.9.6C4.7.6 4.9 2 4.9 2v1.9H8v.6H3.2S.6 4.2.6 8c0 3.8 2.3 3.7 2.3 3.7h1.4V9.9s-.1-2.3 2.3-2.3h3.8s2.2 0 2.2-2.1V2.7S12.9.6 7.9.6z" fill="#3d78f2"/><circle cx="6.2" cy="2.5" r=".75" fill="#dfe9ff"/><g transform="rotate(180 8 8.2)"><path d="M7.9.6C4.7.6 4.9 2 4.9 2v1.9H8v.6H3.2S.6 4.2.6 8c0 3.8 2.3 3.7 2.3 3.7h1.4V9.9s-.1-2.3 2.3-2.3h3.8s2.2 0 2.2-2.1V2.7S12.9.6 7.9.6z" fill="#f5b82e"/><circle cx="6.2" cy="2.5" r=".75" fill="#fff3d0"/></g></svg>
<div class="t" style="left:916.60px;top:18.67px;font-size:13.5px;color:#6c707e;transform:scaleX(0.8593);transform-origin:0 0;-webkit-mask-image:linear-gradient(90deg,#000 20%,rgba(0,0,0,.25) 100%);">sys</div>
<svg style="left:951.00px;top:15.00px;" width="16" height="16" viewBox="0 0 16 16" preserveAspectRatio="none"><path d="M2.8 5.6l5.1 5.3 5.1-5.3" fill="none" stroke="#6c707e" stroke-width="1.25" stroke-linecap="round" stroke-linejoin="round"/></svg>
<div class="abs" style="left:986.50px;top:17.20px;width:2.60px;height:2.60px;background:#6c707e;border-radius:50%"></div>
<div class="abs" style="left:986.50px;top:22.80px;width:2.60px;height:2.60px;background:#6c707e;border-radius:50%"></div>
<div class="abs" style="left:986.50px;top:28.40px;width:2.60px;height:2.60px;background:#6c707e;border-radius:50%"></div></div>
    <div id="banner" class="abs"><svg style="left:14.30px;top:13.20px;" width="15.2" height="15.2" viewBox="0 0 15.2 15.2" preserveAspectRatio="none"><circle cx="7.6" cy="7.6" r="7.6" fill="#3b77f0"/><rect x="6.7" y="6.4" width="1.9" height="5.4" rx=".5" fill="#fff"/><circle cx="7.65" cy="4.1" r="1.15" fill="#fff"/></svg>
<div class="t" style="left:40.30px;top:15.43px;font-size:13.2px;color:#1e1f22;transform:scaleX(0.9685);transform-origin:0 0;">*.spec</div>
<div class="t" style="left:81.60px;top:15.73px;font-size:12.6px;color:#1e1f22;font-feature-settings:'palt';transform:scaleX(0.9027);transform-origin:0 0;">ファイルをサポートするプラグインが見つかりました。</div>
<div class="t" style="left:688.10px;top:15.33px;font-size:13.2px;color:#3f5fa5;transform:scaleX(0.8988);transform-origin:0 0;-webkit-text-stroke:0.05px currentColor;">RPM SPEC File</div>
<div class="t" style="left:776.50px;top:15.80px;font-size:12.4px;color:#3f5fa5;font-feature-settings:'palt';transform:scaleX(0.8983);transform-origin:0 0;-webkit-text-stroke:0.05px currentColor;">プラグインのインストール</div>
<div class="t" style="left:918.00px;top:15.97px;font-size:12.2px;color:#3f5fa5;transform:scaleX(1.0530);transform-origin:0 0;-webkit-text-stroke:0.05px currentColor;">拡張子を無視</div></div>
    <div id="code" class="abs"><div class="abs" style="left:0.00px;top:153.40px;width:1010.00px;height:28.54px;background:#f2f5fc;"></div>
<div class="abs" style="left:90.20px;top:0.00px;width:1.00px;height:427.00px;background:#ebecf0;"></div>
<div class="t mono" style="left:8.00px;top:-10.18px;font-size:17.4px;color:#b0b4c0;-webkit-text-stroke:0.1px currentColor;">38</div>
<div class="t mono" style="left:93.40px;top:-10.18px;font-size:17.4px;color:#17181a;-webkit-text-stroke:0.3px currentColor;">    upx=True,</div>
<div class="t mono" style="left:8.00px;top:18.36px;font-size:17.4px;color:#b0b4c0;-webkit-text-stroke:0.1px currentColor;">39</div>
<div class="t mono" style="left:93.40px;top:18.36px;font-size:17.4px;color:#17181a;-webkit-text-stroke:0.3px currentColor;">    console=False,           # GUI<span class="cj">アプリ（コンソール非表示）</span></div>
<div class="t mono" style="left:8.00px;top:46.90px;font-size:17.4px;color:#b0b4c0;-webkit-text-stroke:0.1px currentColor;">40</div>
<div class="t mono" style="left:93.40px;top:46.90px;font-size:17.4px;color:#17181a;-webkit-text-stroke:0.3px currentColor;">    disable_windowed_traceback=False,</div>
<div class="t mono" style="left:8.00px;top:75.44px;font-size:17.4px;color:#b0b4c0;-webkit-text-stroke:0.1px currentColor;">41</div>
<div class="t mono" style="left:93.40px;top:75.44px;font-size:17.4px;color:#17181a;-webkit-text-stroke:0.3px currentColor;">    argv_emulation=False,</div>
<div class="t mono" style="left:8.00px;top:103.98px;font-size:17.4px;color:#b0b4c0;-webkit-text-stroke:0.1px currentColor;">42</div>
<div class="t mono" style="left:93.40px;top:103.98px;font-size:17.4px;color:#17181a;-webkit-text-stroke:0.3px currentColor;">    target_arch=None,</div>
<div class="t mono" style="left:8.00px;top:132.52px;font-size:17.4px;color:#b0b4c0;-webkit-text-stroke:0.1px currentColor;">43</div>
<div class="t mono" style="left:93.40px;top:132.52px;font-size:17.4px;color:#17181a;-webkit-text-stroke:0.3px currentColor;">    codesign_identity=None,</div>
<div class="t mono" style="left:8.00px;top:161.06px;font-size:17.4px;color:#b0b4c0;-webkit-text-stroke:0.1px currentColor;">44</div>
<div class="t mono" style="left:93.40px;top:161.06px;font-size:17.4px;color:#17181a;-webkit-text-stroke:0.3px currentColor;">    entitlements_file=None,</div>
<div class="t mono" style="left:8.00px;top:189.60px;font-size:17.4px;color:#b0b4c0;-webkit-text-stroke:0.1px currentColor;">45</div>
<div class="t mono" style="left:93.40px;top:189.60px;font-size:17.4px;color:#17181a;-webkit-text-stroke:0.3px currentColor;">    icon='spec_010_basic.ico',  # <span class="cj">アイコンファイル</span></div>
<div class="t mono" style="left:8.00px;top:218.14px;font-size:17.4px;color:#b0b4c0;-webkit-text-stroke:0.1px currentColor;">46</div>
<div class="t mono" style="left:93.40px;top:218.14px;font-size:17.4px;color:#17181a;-webkit-text-stroke:0.3px currentColor;">)</div>
<div class="t mono" style="left:8.00px;top:246.68px;font-size:17.4px;color:#b0b4c0;-webkit-text-stroke:0.1px currentColor;">47</div>
<div class="t mono" style="left:8.00px;top:275.22px;font-size:17.4px;color:#b0b4c0;-webkit-text-stroke:0.1px currentColor;">48</div>
<div class="t mono" style="left:93.40px;top:275.22px;font-size:17.4px;color:#17181a;-webkit-text-stroke:0.3px currentColor;">coll = COLLECT(</div>
<div class="t mono" style="left:8.00px;top:303.76px;font-size:17.4px;color:#b0b4c0;-webkit-text-stroke:0.1px currentColor;">49</div>
<div class="t mono" style="left:93.40px;top:303.76px;font-size:17.4px;color:#17181a;-webkit-text-stroke:0.3px currentColor;">    exe,</div>
<div class="t mono" style="left:8.00px;top:332.30px;font-size:17.4px;color:#b0b4c0;-webkit-text-stroke:0.1px currentColor;">50</div>
<div class="t mono" style="left:93.40px;top:332.30px;font-size:17.4px;color:#17181a;-webkit-text-stroke:0.3px currentColor;">    a.binaries,</div>
<div class="t mono" style="left:8.00px;top:360.84px;font-size:17.4px;color:#b0b4c0;-webkit-text-stroke:0.1px currentColor;">51</div>
<div class="t mono" style="left:93.40px;top:360.84px;font-size:17.4px;color:#17181a;-webkit-text-stroke:0.3px currentColor;">    a.zipfiles,</div>
<div class="t mono" style="left:8.00px;top:389.38px;font-size:17.4px;color:#b0b4c0;-webkit-text-stroke:0.1px currentColor;">52</div>
<div class="t mono" style="left:93.40px;top:389.38px;font-size:17.4px;color:#17181a;-webkit-text-stroke:0.3px currentColor;">    a.datas,</div>
<div class="t mono" style="left:8.00px;top:417.92px;font-size:17.4px;color:#b0b4c0;-webkit-text-stroke:0.1px currentColor;">53</div>
<div class="t mono" style="left:93.40px;top:417.92px;font-size:17.4px;color:#17181a;-webkit-text-stroke:0.3px currentColor;">    strip=False,</div>
<div class="abs" style="left:999.20px;top:269.20px;width:11.30px;height:95.00px;background:#dcdcdf;"></div>
<svg style="left:959.20px;top:352.60px;" width="12" height="18" viewBox="0 0 12 18" preserveAspectRatio="none"><path d="M.8 .8v13l3.100-2.900 2.200 5 2-.9-2.200-4.900h4.300z" fill="#fff" stroke="#2a2a2e" stroke-width=".95" stroke-linejoin="round"/></svg>
<div class="t" style="left:950.00px;top:9.62px;font-size:12.5px;color:#b4b8c2;transform:scaleX(1.0225);transform-origin:0 0;">解析中...</div></div>
  </div>
  <div id="rstrip" class="abs"><svg style="left:10.00px;top:9.00px;" width="30" height="30" viewBox="0 0 1080 1080" preserveAspectRatio="none"><path d="M250 770Q200 762 225 712L298 590Q325 540 325 470V400A195 195 0 0 1 715 400V470Q715 540 742 590L815 712Q840 762 790 770Z" fill="none" stroke="#5f6270" stroke-width="56" stroke-linejoin="round"/><path d="M438 845H602A82 82 0 0 1 438 845Z" fill="#5f6270"/><circle cx="790" cy="275" r="158" fill="#f7f8fa"/><circle cx="790" cy="275" r="132" fill="#e5495b"/></svg>
<svg style="left:10.00px;top:55.00px;" width="30" height="30" viewBox="0 0 1080 1080" preserveAspectRatio="none"><path d="M265 250C288 243 354 214 400 207C446 200 493 200 540 210C587 220 640 242 680 265C720 288 758 323 780 350C802 377 809 412 815 425M655 420C642 410 611 373 580 360C549 347 508 338 470 340C432 342 385 352 350 370C315 388 281 420 260 450C239 480 227 517 225 550C223 583 232 620 250 650C268 680 298 708 330 730C362 752 426 772 445 780M490 460C478 463 438 467 420 480C402 493 387 520 385 540C383 560 399 583 410 600C421 617 443 633 450 640M600 525H840A55 55 0 0 1 895 580V870L775 800H600A55 55 0 0 1 545 745V580A55 55 0 0 1 600 525Z" fill="none" stroke="#5f6270" stroke-width="56" stroke-linecap="round" stroke-linejoin="round"/></svg>
<svg style="left:14.80px;top:103.10px;" width="20" height="21" viewBox="0 0 20 21" preserveAspectRatio="none"><g fill="none" stroke="#5f6270" stroke-width="1.5" stroke-linecap="round" stroke-linejoin="round"><ellipse cx="9.700" cy="4.300" rx="8.300" ry="3.300"/><path d="M1.400 4.300v11.400c0 1.800 3.700 3.300 8.300 3.300s8.300-1.500 8.300-3.300V4.300M1.400 8.100c0 1.800 3.700 3.300 8.300 3.300S18 9.900 18 8.100M1.400 11.900c0 1.800 3.700 3.300 8.300 3.300s8.300-1.500 8.300-3.300"/></g></svg>
<div class="abs" style="left:11.00px;top:142.70px;width:26.70px;height:1.10px;background:#d3d5db;"></div>
<div class="t" style="left:14.60px;top:163.43px;font-size:16.5px;color:#5f6270;font-weight:700;transform:scaleX(0.9915);transform-origin:0 0;">(x)</div></div>
  <div id="term" class="abs">
    <div id="thead" class="abs"><div class="t" style="left:12.80px;top:18.13px;font-size:13.2px;color:#26282c;font-weight:500;transform:scaleX(0.7553);transform-origin:0 0;-webkit-text-stroke:0.35px currentColor;">ターミナル</div>
<div class="t" style="left:93.50px;top:18.13px;font-size:13.2px;color:#525766;font-feature-settings:'palt';transform:scaleX(0.8477);transform-origin:0 0;">ローカル (2)</div>
<svg style="left:166.00px;top:19.70px;" width="10" height="10" viewBox="0 0 10 10" preserveAspectRatio="none"><path d="M1.100 1.100l7.400 7M8.500 1.100L1.100 8.100" stroke="#b0b3bc" stroke-width="1.100" fill="none"/></svg>
<div class="abs" style="left:81.20px;top:42.10px;width:106.20px;height:3.60px;background:#3a76ee;border-radius:1.8px"></div>
<div class="t" style="left:201.40px;top:18.13px;font-size:13.2px;color:#43464f;font-feature-settings:'palt';transform:scaleX(0.7797);transform-origin:0 0;">ローカル</div>
<svg style="left:254.30px;top:19.70px;" width="10" height="10" viewBox="0 0 10 10" preserveAspectRatio="none"><path d="M1.100 1.100l7.400 7M8.500 1.100L1.100 8.100" stroke="#b0b3bc" stroke-width="1.100" fill="none"/></svg>
<svg style="left:282.00px;top:14.00px;" width="16" height="16" viewBox="0 0 16 16" preserveAspectRatio="none"><path d="M8 1.200v13.600M1.200 8h13.600" stroke="#858895" stroke-width="1.200" fill="none" stroke-linecap="round"/></svg>
<svg style="left:311.40px;top:15.00px;" width="16" height="16" viewBox="0 0 16 16" preserveAspectRatio="none"><path d="M2.600 5l5.500 5.300L13.600 5" fill="none" stroke="#858895" stroke-width="1.200" stroke-linecap="round" stroke-linejoin="round"/></svg>
<div class="abs" style="left:1292.40px;top:15.10px;width:2.20px;height:2.20px;background:#858893;border-radius:50%"></div>
<div class="abs" style="left:1292.40px;top:21.10px;width:2.20px;height:2.20px;background:#858893;border-radius:50%"></div>
<div class="abs" style="left:1292.40px;top:27.10px;width:2.20px;height:2.20px;background:#858893;border-radius:50%"></div>
<div class="abs" style="left:1315.50px;top:21.50px;width:14.40px;height:1.20px;background:#858893;"></div></div>
    <div class="t mono" style="left:15.00px;top:43.18px;font-size:15px;color:#17181a;-webkit-text-stroke:0.12px currentColor;">557 INFO: checking Analysis</div>
<div class="t mono" style="left:15.00px;top:63.40px;font-size:15px;color:#17181a;-webkit-text-stroke:0.12px currentColor;">598 INFO: checking PYZ</div>
<div class="t mono" style="left:15.00px;top:83.62px;font-size:15px;color:#17181a;-webkit-text-stroke:0.12px currentColor;">609 INFO: checking PKG</div>
<div class="t mono" style="left:15.00px;top:103.84px;font-size:15px;color:#17181a;-webkit-text-stroke:0.12px currentColor;">620 INFO: Bootloader D:\projects\lessons\desktop-ui-lessons-python\.venv\Lib\site-packages\PyInstaller\bootloader\Windows-64bit-intel\runw.exe</div>
<div class="t mono" style="left:15.00px;top:124.06px;font-size:15px;color:#17181a;-webkit-text-stroke:0.12px currentColor;">620 INFO: checking EXE</div>
<div class="t mono" style="left:15.00px;top:144.28px;font-size:15px;color:#17181a;-webkit-text-stroke:0.12px currentColor;">642 INFO: checking COLLECT</div>
<div class="t mono" style="left:15.00px;top:164.50px;font-size:15px;color:#17181a;-webkit-text-stroke:0.12px currentColor;">663 INFO: Building COLLECT COLLECT-00.toc</div>
<div class="t mono" style="left:15.00px;top:184.72px;font-size:15px;color:#17181a;-webkit-text-stroke:0.12px currentColor;">1370 INFO: Building COLLECT COLLECT-00.toc completed successfully.</div>
<div class="t mono" style="left:15.00px;top:204.94px;font-size:15px;color:#17181a;-webkit-text-stroke:0.12px currentColor;">1382 INFO: Build complete! The results are available in: D:\projects\lessons\desktop-ui-lessons-python\pyinstaller_files\samples\p050_spec_files\dis</div>
<div class="t mono" style="left:15.00px;top:225.16px;font-size:15px;color:#17181a;-webkit-text-stroke:0.12px currentColor;">t</div>
<div class="t mono" style="left:15.00px;top:245.38px;font-size:15px;color:#17181a;-webkit-text-stroke:0.12px currentColor;"><span style="color:#35a852">(.venv)</span> PS D:\projects\lessons\desktop-ui-lessons-python\pyinstaller_files\samples\p050_spec_files&gt;</div>
<div class="abs" style="left:1335.00px;top:236.00px;width:11.00px;height:32.00px;background:#d9dadd;"></div>
  </div>
  <div id="status" class="abs"><svg style="left:15.60px;top:11.20px;" width="10" height="10" viewBox="0 0 10 10" preserveAspectRatio="none"><rect x=".9" y=".9" width="8" height="8" rx="1.800" fill="#edf2fd" stroke="#5a82dc" stroke-width="1.300"/></svg>
<div class="t" style="left:29.40px;top:9.57px;font-size:13.5px;color:#6c707e;transform:scaleX(1.0222);transform-origin:0 0;">desktop-ui-lessons-python</div>
<svg style="left:201.20px;top:10.40px;" width="7" height="10" viewBox="0 0 7 10" preserveAspectRatio="none"><path d="M1.200 1l3.800 3.800L1.200 8.600" fill="none" stroke="#8a8d99" stroke-width="1.150" stroke-linecap="round" stroke-linejoin="round"/></svg>
<div class="t" style="left:217.30px;top:9.57px;font-size:13.5px;color:#6c707e;transform:scaleX(0.9567);transform-origin:0 0;">pyinstaller_files</div>
<svg style="left:316.60px;top:10.40px;" width="7" height="10" viewBox="0 0 7 10" preserveAspectRatio="none"><path d="M1.200 1l3.800 3.800L1.200 8.600" fill="none" stroke="#8a8d99" stroke-width="1.150" stroke-linecap="round" stroke-linejoin="round"/></svg>
<div class="t" style="left:332.80px;top:9.57px;font-size:13.5px;color:#6c707e;transform:scaleX(0.9646);transform-origin:0 0;">samples</div>
<svg style="left:391.80px;top:10.40px;" width="7" height="10" viewBox="0 0 7 10" preserveAspectRatio="none"><path d="M1.200 1l3.800 3.800L1.200 8.600" fill="none" stroke="#8a8d99" stroke-width="1.150" stroke-linecap="round" stroke-linejoin="round"/></svg>
<div class="t" style="left:408.50px;top:9.57px;font-size:13.5px;color:#6c707e;transform:scaleX(0.9357);transform-origin:0 0;">p050_spec_files</div>
<svg style="left:510.60px;top:10.40px;" width="7" height="10" viewBox="0 0 7 10" preserveAspectRatio="none"><path d="M1.200 1l3.800 3.800L1.200 8.600" fill="none" stroke="#8a8d99" stroke-width="1.150" stroke-linecap="round" stroke-linejoin="round"/></svg>
<svg style="left:529.30px;top:7.80px;" width="16" height="14" viewBox="0 0 16 14" preserveAspectRatio="none"><path d="M1.200 2h12.400M1.200 5.300h8.300M1.200 8.600h12.400M1.200 11.900h8.300" stroke="#818594" stroke-width="1.150" fill="none"/></svg>
<div class="t" style="left:571.60px;top:9.83px;font-size:13.2px;color:#6c707e;font-feature-settings:'palt';transform:scaleX(0.9257);transform-origin:0 0;">インデックス作成中...</div>
<div class="abs" style="left:691.80px;top:13.60px;width:163.20px;height:4.40px;background:linear-gradient(90deg,#6a97ef 0%,#3b70dc 40%,#4a7fe6 72%,#93b3f3 100%);border-radius:2.2px"></div>
<div class="abs" style="left:861.70px;top:6.30px;width:18.00px;height:18.00px;background:#e4e5e9;border-radius:50%"></div>
<div class="abs" style="left:867.70px;top:11.20px;width:1.70px;height:8.20px;background:#b0b3bc;"></div>
<div class="abs" style="left:872.00px;top:11.20px;width:1.70px;height:8.20px;background:#b0b3bc;"></div>
<div class="t" style="left:896.80px;top:9.57px;font-size:13.5px;color:#6c707e;transform:scaleX(0.9616);transform-origin:0 0;">44:28</div>
<div class="t" style="left:947.80px;top:9.57px;font-size:13.5px;color:#6c707e;transform:scaleX(0.8252);transform-origin:0 0;">CRLF</div>
<div class="t" style="left:995.40px;top:9.57px;font-size:13.5px;color:#6c707e;transform:scaleX(0.9203);transform-origin:0 0;">UTF-8</div>
<svg style="left:1051.40px;top:6.60px;" width="16" height="18" viewBox="0 0 16 18" preserveAspectRatio="none"><g fill="none" stroke="#6c707e" stroke-width="1.250" stroke-linejoin="round" stroke-linecap="round"><path d="M6.600 15.400H3.400c-1 0-1.800-.8-1.800-1.800V3.400c0-1 .8-1.800 1.800-1.800h5.400l4 4v2.200"/><circle cx="11.200" cy="12.600" r="2.100"/><path d="M11.200 8.800v1.300M11.200 15.100v1.300M7.900 10.700l1.100.65M13.400 13.850l1.100.65M7.900 14.500l1.100-.65M13.400 11.350l1.100-.65"/></g></svg>
<div class="t" style="left:1069.40px;top:9.83px;font-size:13.2px;color:#6c707e;font-feature-settings:'palt';transform:scaleX(0.8716);transform-origin:0 0;">4 スペース</div>
<div class="t" style="left:1139.80px;top:9.57px;font-size:13.5px;color:#6c707e;transform:scaleX(1.0066);transform-origin:0 0;">Python 3.13 (desktop-ui-lessons-python)</div>
<svg style="left:1405.20px;top:8.40px;" width="16" height="15" viewBox="0 0 16 15" preserveAspectRatio="none"><g fill="none" stroke="#6c707e" stroke-width="1.250" stroke-linecap="round"><rect x="1" y="5.800" width="10.600" height="7.600" rx="1.600"/><path d="M8.400 5.600V3.800c0-1.600 1.200-2.800 2.800-2.800s2.800 1.200 2.800 2.800"/></g><circle cx="6.300" cy="9.600" r="1" fill="#6c707e"/></svg></div>
  <div id="task" class="abs"><svg style="left:15.40px;top:8.20px;" width="18" height="18" viewBox="0 0 18 18" preserveAspectRatio="none"><defs><linearGradient id="sung" x1="0" y1="0" x2="0" y2="1"><stop offset="0" stop-color="#f8b53a"/><stop offset="1" stop-color="#ef8a15"/></linearGradient></defs><circle cx="7.800" cy="7.600" r="6.600" fill="#f5a21f"/><circle cx="7.800" cy="7.600" r="6.600" fill="url(#sung)"/><path d="M5.200 16.600a3.200 3.200 0 0 1 .300-6.400 4.300 4.300 0 0 1 8-.800 3.600 3.600 0 0 1 .300 7.200z" fill="#c9d6ef" stroke="#aebfe0" stroke-width=".5"/></svg>
<div class="t" style="left:37.70px;top:6.98px;font-size:9px;color:#1c1c1c;transform:scaleX(0.9200);transform-origin:0 0;-webkit-text-stroke:0.2px currentColor;">26°C</div>
<div class="t" style="left:37.60px;top:19.15px;font-size:8.8px;color:#4a4a4a;font-feature-settings:'palt';transform:scaleX(0.9416);transform-origin:0 0;-webkit-text-stroke:0;">くもり時々晴れ</div>
<svg style="left:495.50px;top:8.70px;" width="17.7" height="17" viewBox="0 0 17.7 17" preserveAspectRatio="none"><defs><linearGradient id="wg" x1="0" y1="0" x2="1" y2="1"><stop offset="0" stop-color="#35a5ee"/><stop offset="1" stop-color="#0b6fd2"/></linearGradient></defs><g fill="url(#wg)"><rect x="0" y="0" width="8.400" height="8.100"/><rect x="9.300" y="0" width="8.400" height="8.100"/><rect x="0" y="8.900" width="8.400" height="8.100"/><rect x="9.300" y="8.900" width="8.400" height="8.100"/></g></svg>
<div class="abs" style="left:523.70px;top:6.20px;width:163.30px;height:21.80px;background:#f5f7fc;border-radius:11px;box-shadow:0 0 0 .6px #d9dfea"></div>
<svg style="left:530.00px;top:11.00px;" width="14" height="14" viewBox="0 0 14 14" preserveAspectRatio="none"><g fill="none" stroke="#2a2a2a" stroke-width="1.300" stroke-linecap="round"><circle cx="5.800" cy="5.800" r="4"/><path d="M8.800 8.900l3 3.200"/></g></svg>
<div class="t" style="left:550.60px;top:13.27px;font-size:10.2px;color:#707378;transform:scaleX(1.0160);transform-origin:0 0;">検索</div>
<svg style="left:649.30px;top:9.20px;" width="35" height="16" viewBox="0 0 35 16" preserveAspectRatio="none"><rect x="0.500" y="4.500" width="8" height="6" rx="1" fill="#4a4a4a"/><circle cx="4.500" cy="7.500" r="2" fill="#9aa0a8"/><rect x="2" y="3.300" width="3" height="1.500" fill="#333"/><rect x="10.600" y="3.600" width="6.600" height="10.400" rx="1.200" fill="#eaa1a6"/><rect x="12.600" y="1.200" width="2.600" height="2.600" fill="none" stroke="#b77" stroke-width=".7"/><rect x="17.600" y="2.400" width="6.400" height="11.600" rx="1.200" fill="#6fb79a"/><rect x="19.400" y="0.300" width="2.800" height="2.300" fill="none" stroke="#4c8" stroke-width=".7"/><ellipse cx="29.600" cy="6.400" rx="5.200" ry="3.600" fill="#e3a93c"/><ellipse cx="29.600" cy="5.600" rx="3" ry="2" fill="#f3cf7a"/><ellipse cx="17" cy="14.300" rx="16" ry="1.300" fill="#c9ccd3" opacity=".7"/></svg>
<div class="abs" style="left:697.00px;top:13.80px;width:13.00px;height:11.20px;background:#1e1e1e;border-radius:1.5px"></div>
<div class="abs" style="left:701.20px;top:9.00px;width:13.20px;height:12.00px;background:linear-gradient(135deg,#f4f5f6,#c9ccd0);border-radius:1.2px"></div>
<div class="abs" style="left:730.00px;top:8.00px;width:18.00px;height:17.70px;background:#d22a2e;border-radius:2px"></div>
<svg style="left:732.50px;top:10.40px;" width="13" height="13" viewBox="0 0 13 13" preserveAspectRatio="none"><g fill="none" stroke="#fff" stroke-width="1.100"><path d="M3 1.200h6.400v10.600H3z"/><circle cx="4.200" cy="6.600" r="2.400" fill="#d22a2e"/><path d="M6.600 8.800l3.200-3.200"/></g></svg>
<svg style="left:760.00px;top:3.00px;" width="30" height="30" viewBox="0 0 30 30" preserveAspectRatio="none"><circle cx="11.2" cy="14.6" r="9" fill="#fbc116"/><path d="M11.2 14.6L3.41 10.10A9 9 0 0 1 18.99 10.10z" fill="#e33b2e"/><path d="M11.2 14.6L3.41 10.10A9 9 0 0 0 11.20 23.60z" fill="#2da94f"/><circle cx="11.2" cy="14.6" r="4.14" fill="#fff"/><circle cx="11.2" cy="14.6" r="3.24" fill="#3f83f0"/><circle cx="19.600" cy="6" r="5" fill="#2f8fe0"/><path d="M16.800 7.800l2.300-3.600 1.600 2.400 1-1.200 1.400 2.400z" fill="#fff"/></svg>
<svg style="left:795.50px;top:8.60px;" width="19" height="18" viewBox="0 0 19 18" preserveAspectRatio="none"><path d="M.5 3c0-.8.600-1.400 1.400-1.400h4.600l1.800 1.800h8.800c.8 0 1.400.6 1.400 1.400v10.400c0 .8-.6 1.400-1.400 1.400H1.900c-.8 0-1.400-.6-1.400-1.400z" fill="#f2b632"/><path d="M.5 6.200h18v9.800c0 .8-.6 1.400-1.400 1.400H1.900c-.8 0-1.400-.6-1.400-1.400z" fill="#fbd04e"/><rect x="5" y="12.400" width="9" height="4" rx=".8" fill="#2f86dd"/></svg>
<svg style="left:826.00px;top:3.00px;" width="30" height="30" viewBox="0 0 30 30" preserveAspectRatio="none"><circle cx="11" cy="14.6" r="9" fill="#fbc116"/><path d="M11 14.6L3.21 10.10A9 9 0 0 1 18.79 10.10z" fill="#e33b2e"/><path d="M11 14.6L3.21 10.10A9 9 0 0 0 11.00 23.60z" fill="#2da94f"/><circle cx="11" cy="14.6" r="4.14" fill="#fff"/><circle cx="11" cy="14.6" r="3.24" fill="#3f83f0"/><circle cx="18.600" cy="7.400" r="5.100" fill="#f08a24"/><text x="16.700" y="9.700" font-family="Liberation Sans,sans-serif" font-size="6.500" fill="#fff">k</text></svg>
<div class="abs" style="left:861.20px;top:10.40px;width:18.80px;height:13.40px;background:#2d2d2f;border-radius:1.5px;box-shadow:inset 0 2px 0 #4b4b4f"></div>
<svg style="left:863.50px;top:13.40px;" width="14" height="9" viewBox="0 0 14 9" preserveAspectRatio="none"><path d="M1.400 1.400l3 2.700-3 2.700M6.200 7.400h5.600" fill="none" stroke="#fff" stroke-width="1.250"/></svg>
<div class="abs" style="left:890.00px;top:3.00px;width:27.50px;height:27.50px;background:rgba(255,255,255,.5);border-radius:4px"></div>
<svg style="left:894.50px;top:8.50px;" width="19.2" height="18" viewBox="0 0 19 20" preserveAspectRatio="none"><path d="M0.500 1.200L10 0.200l1.200 8-8.700 3.200z" fill="#21d3f5"/><path d="M9.500 1.500l7.200 1.200 2.200 5.600-3.200 8.200-6.200.4z" fill="#3ddc84"/><path d="M12.500 5.200l5.800 1.400.5 10-9 2.600-2.500-6z" fill="#f6ea2a"/><path d="M1.300 11.200l9.600-1.500 1.600 9.600-10.200.2z" fill="#23d18b"/><path d="M8 14l6 .2-.5 5.300-6.500-.3z" fill="#c5e236"/><rect x="3.900" y="4.600" width="10.600" height="10.600" fill="#060606"/><text x="4.700" y="10.200" font-family="Liberation Sans,sans-serif" font-size="5.600" font-weight="700" fill="#fff" textLength="7.600" lengthAdjust="spacingAndGlyphs">PC</text><rect x="5" y="12.600" width="4" height=".9" fill="#fff"/></svg>
<div class="abs" style="left:898.00px;top:29.20px;width:11.50px;height:2.40px;background:#2f7de1;border-radius:1.2px"></div>
<div class="abs" style="left:927.50px;top:9.00px;width:18.00px;height:14.00px;background:#3b4046;border-radius:1.5px;box-shadow:inset 0 2.500px 0 #23262a"></div>
<svg style="left:934.50px;top:13.50px;" width="12" height="12" viewBox="0 0 12 12" preserveAspectRatio="none"><path d="M5.900.4C3.500.4 3.700 1.500 3.700 1.500v1.400H6v.5H2.400S.4 3.100.4 6c0 2.900 1.700 2.800 1.700 2.800h1.100V7.400s0-1.700 1.700-1.700h2.900s1.600 0 1.600-1.600V2S9.700.4 5.900.4z" fill="#3d78c2"/><g transform="rotate(180 6 6.150)"><path d="M5.900.4C3.500.4 3.700 1.500 3.700 1.500v1.400H6v.5H2.400S.4 3.100.4 6c0 2.900 1.700 2.800 1.700 2.800h1.100V7.400s0-1.700 1.700-1.700h2.900s1.600 0 1.600-1.600V2S9.700.4 5.900.4z" fill="#f2c43a"/></g></svg>
<div class="abs" style="left:769.50px;top:29.60px;width:4.00px;height:1.70px;background:#8a8f98;border-radius:.8px"></div>
<div class="abs" style="left:802.80px;top:29.60px;width:4.00px;height:1.70px;background:#8a8f98;border-radius:.8px"></div>
<div class="abs" style="left:835.30px;top:29.60px;width:4.00px;height:1.70px;background:#8a8f98;border-radius:.8px"></div>
<div class="abs" style="left:868.40px;top:29.60px;width:4.00px;height:1.70px;background:#8a8f98;border-radius:.8px"></div>
<div class="abs" style="left:934.60px;top:29.60px;width:4.00px;height:1.70px;background:#8a8f98;border-radius:.8px"></div>
<svg style="left:1167.00px;top:13.00px;" width="11" height="8" viewBox="0 0 11 8" preserveAspectRatio="none"><path d="M1.300 6.100l4.100-4.300 4.100 4.300" fill="none" stroke="#222" stroke-width="1.400" stroke-linecap="round" stroke-linejoin="round"/></svg>
<svg style="left:1189.50px;top:11.80px;" width="14" height="10" viewBox="0 0 14 10" preserveAspectRatio="none"><path d="M3.600 9a2.800 2.800 0 0 1-.2-5.600 3.700 3.700 0 0 1 7-.6 3.100 3.100 0 0 1-.2 6.200z" fill="#9b9ea4" stroke="#2a2a2a" stroke-width="1.050"/></svg>
<svg style="left:1213.40px;top:11.60px;" width="13" height="12" viewBox="0 0 13 12" preserveAspectRatio="none"><g fill="#111"><path d="M3.400.8l2.700 1.800-2.700 1.800L.700 2.600zM9.400.8l2.700 1.800-2.700 1.800-2.700-1.800zM3.400 5.200l2.700 1.800-2.700 1.800L.700 7zM9.400 5.200l2.700 1.800-2.700 1.800L6.700 7z"/></g><rect x="0" y="5.400" width="6.400" height="6" rx=".8" fill="#e0182d"/><text x="1.500" y="10.400" font-family="Liberation Sans,sans-serif" font-size="5.600" font-weight="700" fill="#fff">4</text></svg>
<svg style="left:1239.60px;top:11.20px;" width="10" height="12" viewBox="0 0 10 12" preserveAspectRatio="none"><g fill="none" stroke="#3b79d9" stroke-width="1.250" stroke-linecap="round"><rect x="3" y=".7" width="3.400" height="6.400" rx="1.700" fill="#7aa7ee"/><path d="M.9 5.400c0 2.200 1.600 3.800 3.800 3.800s3.800-1.600 3.800-3.800M4.700 9.300v2"/></g></svg>
<div class="t" style="left:1264.00px;top:11.97px;font-size:11.5px;color:#b3b7bf;transform:scaleX(1.1210);transform-origin:0 0;">A</div>
<div class="abs" style="left:1290.50px;top:11.60px;width:10.60px;height:10.60px;background:#1f6fd2;border-radius:50%"></div>
<div class="abs" style="left:1299.00px;top:17.30px;width:4.00px;height:4.00px;background:#e0362c;border-radius:50%"></div>
<div class="abs" style="left:1297.60px;top:20.20px;width:3.40px;height:3.40px;background:#f2c230;border-radius:50%"></div>
<svg style="left:1319.00px;top:11.60px;" width="12" height="10" viewBox="0 0 12 10" preserveAspectRatio="none"><g fill="none" stroke="#1f1f1f" stroke-width="1.150" stroke-linecap="round"><path d="M.7 3.400c2.900-3 7.300-3 10.200 0M2.300 5.300c2-2.100 5-2.100 7 0M3.900 7.100c1.100-1.100 2.700-1.100 3.800 0"/></g><circle cx="5.800" cy="8.600" r=".9" fill="#1f1f1f"/></svg>
<svg style="left:1337.00px;top:11.80px;" width="13" height="10" viewBox="0 0 13 10" preserveAspectRatio="none"><g fill="none" stroke="#1f1f1f" stroke-width="1.050" stroke-linecap="round" stroke-linejoin="round"><path d="M.7 3.600h1.900l2.600-2.400v7.800L2.600 6.600H.7z"/><path d="M6.800 3.300c.8.900.8 2.500 0 3.400M8.400 2c1.500 1.700 1.500 4.300 0 6M10 .8c2.100 2.400 2.100 6 0 8.400"/></g></svg>
<svg style="left:1355.40px;top:11.60px;" width="13" height="11" viewBox="0 0 13 11" preserveAspectRatio="none"><g fill="none" stroke="#1f1f1f" stroke-width="1.100"><rect x=".6" y="2.400" width="9" height="5.400" rx="1"/><path d="M10.600 4v2.200"/></g><rect x="2" y="3.800" width="5" height="2.600" fill="#1f1f1f"/><path d="M2.400 1.200c1.800-1.100 4.300-1 5.800.2M8.600 0v1.800H6.800M8.200 9c-1.800 1.100-4.300 1-5.800-.2" fill="none" stroke="#1f1f1f" stroke-width=".9"/><path d="M8.200 7.600h4l-2 2.800z" fill="#1f1f1f"/></svg>
<div class="t" style="left:1405.20px;top:7.15px;font-size:8.8px;color:#1c1c1c;transform:scaleX(0.9130);transform-origin:0 0;">13:12</div>
<div class="t" style="left:1380.30px;top:19.25px;font-size:8.8px;color:#1c1c1c;transform:scaleX(1.0220);transform-origin:0 0;">2025/09/27</div></div>
</div>
<div id="rpanel" class="abs"><svg style="left:178.50px;top:75.50px;" width="119" height="119" viewBox="0 0 119 119" preserveAspectRatio="none"><defs><clipPath id="avc"><circle cx="59.500" cy="59.500" r="59.500"/></clipPath></defs><circle cx="59.500" cy="59.500" r="59.500" fill="#2f9bd3"/><g clip-path="url(#avc)"><path d="M0 27.200h60l-1.200 2.300L0 30.800z" fill="#fff"/><path d="M-2.3 29.7L55.1 38.2M-4.0 33.5L50.3 46.3M-5.2 37.2L45.0 55.5M-5.8 41.6L39.6 64.8M-5.9 45.2L34.2 73.9M-5.3 48.1L28.7 83.2" stroke="#fff" stroke-width="1.700" fill="none"/><path d="M60 27.200l31.800 56.700H27z" fill="#fff"/><path d="M63.300 27.800L95 57v26.300l-1.300.1z" fill="#fff"/><circle cx="18.100" cy="98.900" r="4.900" fill="#fff"/><path d="M13.300 97.500l3.600 6.300" stroke="#c8242b" stroke-width="1.200" fill="none"/></g></svg>
<div class="t" style="left:12.60px;top:245.49px;font-size:17.5px;color:#f2f2f2;transform:scaleX(1.0143);transform-origin:0 0;">小川慶一</div></div>
</body>
</html>
